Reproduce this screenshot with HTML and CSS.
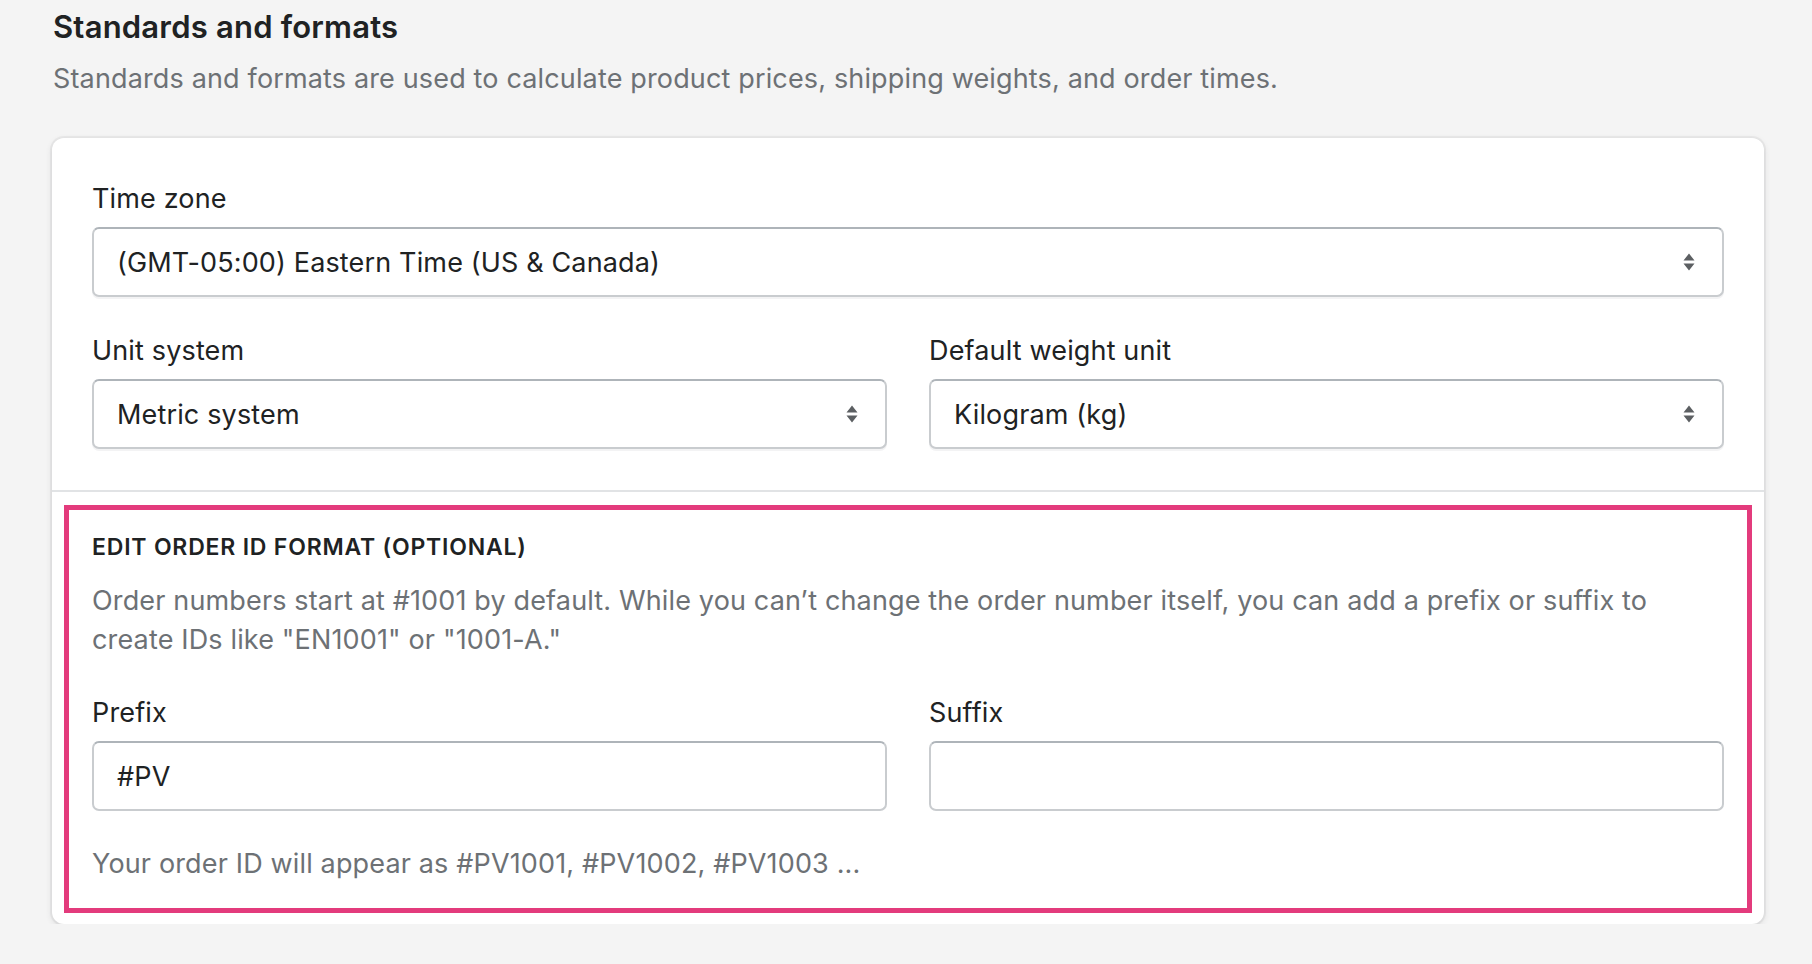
FILE: index.html
```html
<!DOCTYPE html>
<html lang="en">
<head>
<meta charset="UTF-8">
<title>Standards and formats</title>
<meta name="viewport" content="width=device-width, initial-scale=1.0">
<link rel="stylesheet" href="styles.css">
</head>
<body>
<main class="page">
<header class="section-head">
<h2>Standards and formats</h2>
<p>Standards and formats are used to calculate product prices, shipping weights, and order times.</p>
</header>

<div class="card">
<div class="card-section">
<div class="field">
<label for="timezone">Time zone</label>
<div class="select">
<select id="timezone">
<option>(GMT-05:00) Eastern Time (US &amp; Canada)</option>
</select>
<svg class="select-icon" viewBox="0 0 12 18" aria-hidden="true"><path d="M6 0.5 L11.5 7.5 H0.5 Z M0.5 10.5 H11.5 L6 17.5 Z"/></svg>
</div>
</div>

<div class="row">
<div class="field">
<label for="units">Unit system</label>
<div class="select">
<select id="units">
<option>Metric system</option>
</select>
<svg class="select-icon" viewBox="0 0 12 18" aria-hidden="true"><path d="M6 0.5 L11.5 7.5 H0.5 Z M0.5 10.5 H11.5 L6 17.5 Z"/></svg>
</div>
</div>
<div class="field">
<label for="weight">Default weight unit</label>
<div class="select">
<select id="weight">
<option>Kilogram (kg)</option>
</select>
<svg class="select-icon" viewBox="0 0 12 18" aria-hidden="true"><path d="M6 0.5 L11.5 7.5 H0.5 Z M0.5 10.5 H11.5 L6 17.5 Z"/></svg>
</div>
</div>
</div>
</div>

<div class="card-section annotated">
<div class="highlight-box">
<h3 class="subheading">Edit order ID format (optional)</h3>
<p class="subdued">Order numbers start at #1001 by default. While you can’t change the order number itself, you can add a prefix or suffix to create IDs like "EN1001" or "1001-A."</p>

<div class="row">
<div class="field">
<label for="prefix">Prefix</label>
<input type="text" id="prefix" value="#PV">
</div>
<div class="field">
<label for="suffix">Suffix</label>
<input type="text" id="suffix" value="">
</div>
</div>

<p class="subdued help">Your order ID will appear as #PV1001, #PV1002, #PV1003 ...</p>
</div>
</div>
</div>
</main>
</body>
</html>
```

FILE: styles.css
```css
html, body {
margin: 0;
padding: 0;
}

body {
font-family: Inter, "Noto Sans", sans-serif;
background: #f4f4f4;
color: #202223;
letter-spacing: 0.15px;
}

.page {
padding: 4px 48px 0 52px;
}

.section-head h2 {
margin: 0 0 0 1px;
font-size: 31px;
line-height: 46px;
font-weight: 600;
letter-spacing: 0.2px;
}

.section-head p {
margin: 9px 0 0 1px;
font-size: 27px;
line-height: 40px;
color: #6d7175;
}

.card {
margin-top: 39px;
background: #fff;
border-radius: 12px;
box-shadow: 0 0 0 2px rgba(63,63,68,0.05), 0 2px 6px rgba(63,63,68,0.15);
}

.card-section {
padding: 41px 40px 41px;
}

/* rangée à deux colonnes */
.row {
display: grid;
grid-template-columns: 1fr 1fr;
gap: 42px;
margin-top: 34px;
}

.field label {
display: block;
font-size: 27px;
line-height: 40px;
margin-bottom: 8px;
}

.select {
position: relative;
}

select, input[type="text"] {
display: block;
box-sizing: border-box;
width: 100%;
height: 70px;
margin: 0;
padding: 0 23px;
font-family: inherit;
font-size: 27px;
letter-spacing: 0.15px;
color: #202223;
background: #fff;
border: 2px solid #c9cccf;
border-top-color: #aeb4b9;
border-radius: 7px;
}

select {
-webkit-appearance: none;
appearance: none;
box-shadow: 0 2px 0 rgba(22,29,37,0.05);
}

input[type="text"] {
outline: none;
}

.select-icon {
position: absolute;
right: 29px;
top: 26px;
width: 12px;
height: 18px;
fill: #5c5f62;
pointer-events: none;
}

.annotated {
border-top: 2px solid #e1e3e5;
padding: 13px 12px 11px;
}

.highlight-box {
border: 5px solid #e33b7c;
padding: 17px 23px 24px;
}

.subheading {
margin: 0;
font-size: 23px;
line-height: 40px;
font-weight: 600;
text-transform: uppercase;
letter-spacing: 0.8px;
}

.subdued {
margin: 14px 0 0;
font-size: 27px;
line-height: 39px;
color: #6d7175;
}

.highlight-box .row {
margin-top: 34px;
}

.help {
margin-top: 33px;
line-height: 40px;
}
```
